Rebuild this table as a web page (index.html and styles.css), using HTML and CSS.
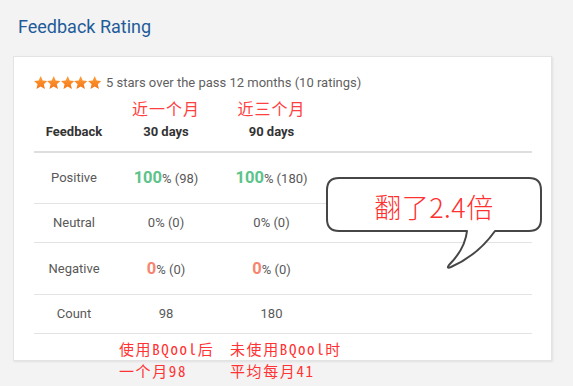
FILE: index.html
```html
<!DOCTYPE html>
<html lang="zh">
<head>
<meta charset="utf-8">
<link rel="stylesheet" href="styles.css">
</head>
<body>
<div class="page">
  <h2 class="title">Feedback Rating</h2>
  <div class="card">
    <div class="rating">
      <span class="stars">
        <svg viewBox="1.5 1.5 21 20"><defs><linearGradient id="g" x1="0" y1="0" x2="0" y2="1"><stop offset="0" stop-color="#ffa03a"/><stop offset="1" stop-color="#f47414"/></linearGradient></defs><path d="M12 1.5l3.1 6.9 7.4.7-5.6 5 1.7 7.4L12 17.6l-6.6 3.9 1.7-7.4-5.6-5 7.4-.7z" fill="url(#g)"/></svg>
        <svg viewBox="1.5 1.5 21 20"><path d="M12 1.5l3.1 6.9 7.4.7-5.6 5 1.7 7.4L12 17.6l-6.6 3.9 1.7-7.4-5.6-5 7.4-.7z" fill="url(#g)"/></svg>
        <svg viewBox="1.5 1.5 21 20"><path d="M12 1.5l3.1 6.9 7.4.7-5.6 5 1.7 7.4L12 17.6l-6.6 3.9 1.7-7.4-5.6-5 7.4-.7z" fill="url(#g)"/></svg>
        <svg viewBox="1.5 1.5 21 20"><path d="M12 1.5l3.1 6.9 7.4.7-5.6 5 1.7 7.4L12 17.6l-6.6 3.9 1.7-7.4-5.6-5 7.4-.7z" fill="url(#g)"/></svg>
        <svg viewBox="1.5 1.5 21 20"><path d="M12 1.5l3.1 6.9 7.4.7-5.6 5 1.7 7.4L12 17.6l-6.6 3.9 1.7-7.4-5.6-5 7.4-.7z" fill="url(#g)"/></svg>
      </span>
      <span class="rating-text">5 stars over the pass 12 months (10 ratings)</span>
    </div>
    <table class="fb">
      <colgroup><col class="c1"><col class="c2"><col class="c3"><col></colgroup>
      <thead>
        <tr class="note-row"><th></th><th class="note">近一个月</th><th class="note">近三个月</th><th></th></tr>
        <tr class="head-row"><th>Feedback</th><th>30 days</th><th>90 days</th><th></th></tr>
      </thead>
      <tbody>
        <tr class="tall"><td>Positive</td><td><b class="pos">100</b>% (98)</td><td><b class="pos">100</b>% (180)</td><td></td></tr>
        <tr class="short"><td>Neutral</td><td>0% (0)</td><td>0% (0)</td><td></td></tr>
        <tr class="tall"><td>Negative</td><td><b class="neg">0</b>% (0)</td><td><b class="neg">0</b>% (0)</td><td></td></tr>
        <tr class="short"><td>Count</td><td>98</td><td>180</td><td></td></tr>
      </tbody>
    </table>
  </div>
  <div class="anno anno1">使用BQool后<br>一个月98</div>
  <div class="anno anno2">未使用BQool时<br>平均每月41</div>
  <div class="bubble">
    <svg class="bubble-shape" width="218" height="93" viewBox="0 0 218 93"><path d="M13 1H203Q215 1 215 13V42Q215 54 203 54H169Q152 78 125 90Q120 92 123 88Q139 72 141 54H13Q1 54 1 42V13Q1 1 13 1Z" fill="#fff" stroke="#464646" stroke-width="2" stroke-linejoin="round"/></svg>
    <div class="bubble-text">翻了2.4倍</div>
  </div>
</div>
</body>
</html>
```

FILE: styles.css
```css
* { box-sizing: border-box; }
html, body { margin: 0; padding: 0; }
body {
  background: #f3f3f3;
  font-family: Roboto, "Noto Sans CJK SC", sans-serif;
  color: #595959;
  width: 573px;
  height: 386px;
  overflow: hidden;
}
.page {
  position: relative;
  padding: 15px 0 0 13px;
}
.title {
  margin: 0 0 17px 5px;
  font-size: 18px;
  font-weight: 400;
  line-height: 24px;
  color: #1f5c99;
}
.card {
  width: 539px;
  height: 305px;
  background: #fff;
  border: 1px solid #e3e3e3;
  box-shadow: 1px 1px 2px rgba(0,0,0,0.08);
  padding: 17px 0 0 20px;
}
.rating {
  display: flex;
  align-items: center;
  height: 17px;
}
.stars { display: flex; margin-right: 5px; }
.stars svg { width: 13.4px; height: 13px; display: block; }
.rating-text { font-size: 13px; color: #5f5f5f; }
.fb {
  width: 498px;
  border-collapse: collapse;
  margin-top: 5px;
  table-layout: fixed;
}
.c1 { width: 80px; }
.c2 { width: 104px; }
.c3 { width: 107px; }
.fb th, .fb td { padding: 0; text-align: center; }
.note-row th { height: 24px; vertical-align: middle; }
.note {
  font-family: "Noto Sans CJK SC", sans-serif;
  font-weight: 400;
  font-size: 16px;
  letter-spacing: 1px;
  color: #ff4040;
}
.head-row th {
  height: 32px;
  font-size: 13px;
  font-weight: 700;
  color: #333;
  border-bottom: 2px solid #dedede;
  vertical-align: middle;
  padding-bottom: 9px;
}
.fb td {
  font-size: 13px;
  color: #595959;
  border-bottom: 1px solid #e3e3e3;
  vertical-align: middle;
}
.fb tr.tall td { height: 51px; }
.fb tr.short td { height: 39px; }
.fb tr:nth-child(3) td { height: 52px; }
.pos { color: #5cc38a; font-size: 16.5px; font-weight: 700; }
.neg { color: #f7846e; font-size: 16.5px; font-weight: 700; }
.anno {
  position: absolute;
  top: 338px;
  font-family: "Noto Sans Mono CJK SC", "Noto Sans CJK SC", sans-serif;
  font-size: 15px;
  letter-spacing: 1.6px;
  line-height: 22px;
  color: #ff3333;
  white-space: nowrap;
}
.anno1 { left: 119px; }
.anno2 { left: 230px; }
.bubble {
  position: absolute;
  left: 326px;
  top: 177px;
  width: 218px;
  height: 93px;
}
.bubble-shape { position: absolute; left: 0; top: 0; }
.bubble-text {
  position: relative;
  width: 216px;
  height: 58px;
  display: flex;
  align-items: center;
  justify-content: center;
  font-family: "Noto Sans CJK SC", sans-serif;
  font-size: 27px;
  font-weight: 300;
  color: #ff3030;
  letter-spacing: 0.5px;
}
```
